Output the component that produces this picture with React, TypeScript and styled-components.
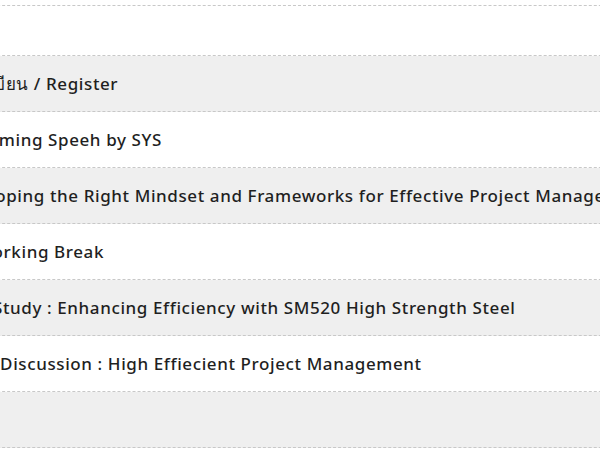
import React from "react";
import styled, { createGlobalStyle } from "styled-components";

const Global = createGlobalStyle`
  html, body {
    margin: 0;
    padding: 0;
    background: #ffffff;
    overflow: hidden;
  }
  body {
    font-family: "Noto Sans", "Open Sans", sans-serif;
  }
`;

const Viewport = styled.div`
  width: 600px;
  height: 450px;
  overflow: hidden;
  background: #ffffff;
`;

const Table = styled.div`
  display: flex;
  flex-direction: column;
  margin-top: 5px;
  margin-left: -53px;
  width: 720px;
  border-top: 1px dashed #c8c8c8;
`;

const Row = styled.div<{ $alt?: boolean; $h: number }>`
  display: flex;
  align-items: center;
  height: ${(p) => p.$h}px;
  box-sizing: border-box;
  background: ${(p) => (p.$alt ? "#efefef" : "#ffffff")};
  border-bottom: 1px dashed #c8c8c8;
`;

const Title = styled.span`
  font-size: 17px;
  font-weight: 500;
  letter-spacing: 0.6px;
  color: #1f1f1f;
  white-space: nowrap;
  line-height: 1;
`;

const items = [
  "ลงทะเบียน / Register",
  "Welcoming Speeh by SYS",
  "Developing the Right Mindset and Frameworks for Effective Project Management",
  "Networking Break",
  "Case Study : Enhancing Efficiency with SM520 High Strength Steel",
  "Panel Discussion : High Effiecient Project Management",
  "",
];

export default function App() {
  return (
    <Viewport>
      <Global />
      <Table>
        <Row $h={50}>
          <Title />
        </Row>
        {items.map((t, i) => (
          <Row key={i} $alt={i % 2 === 0} $h={56}>
            <Title>{t}</Title>
          </Row>
        ))}
      </Table>
    </Viewport>
  );
}
